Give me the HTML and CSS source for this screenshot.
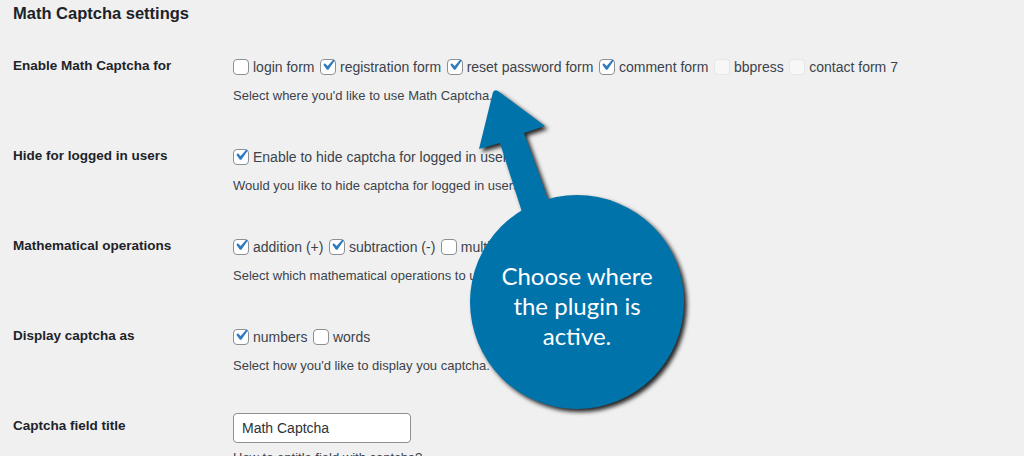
FILE: index.html
```html
<!DOCTYPE html>
<html lang="en">
<head>
<meta charset="utf-8">
<title>Math Captcha settings</title>
<link rel="stylesheet" href="styles.css">
</head>
<body>
<div class="wrap">
  <h2 class="title">Math Captcha settings</h2>
  <div class="form">
    <div class="row">
      <div class="th">Enable Math Captcha for</div>
      <div class="td">
        <div class="opts">
          <span class="opt"><span class="cb"></span>login form</span>
          <span class="opt"><span class="cb on"><svg viewBox="0 0 20 20"><path d="M14.83 4.89l1.34.94-5.81 8.38H9.02L5.78 9.67l1.34-1.25 2.57 2.4z"/></svg></span>registration form</span>
          <span class="opt"><span class="cb on"><svg viewBox="0 0 20 20"><path d="M14.83 4.89l1.34.94-5.81 8.38H9.02L5.78 9.67l1.34-1.25 2.57 2.4z"/></svg></span>reset password form</span>
          <span class="opt"><span class="cb on"><svg viewBox="0 0 20 20"><path d="M14.83 4.89l1.34.94-5.81 8.38H9.02L5.78 9.67l1.34-1.25 2.57 2.4z"/></svg></span>comment form</span>
          <span class="opt"><span class="cb off"></span>bbpress</span>
          <span class="opt"><span class="cb off"></span>contact form 7</span>
        </div>
        <p class="desc">Select where you'd like to use Math Captcha.</p>
      </div>
    </div>
    <div class="row">
      <div class="th">Hide for logged in users</div>
      <div class="td">
        <div class="opts">
          <span class="opt"><span class="cb on"><svg viewBox="0 0 20 20"><path d="M14.83 4.89l1.34.94-5.81 8.38H9.02L5.78 9.67l1.34-1.25 2.57 2.4z"/></svg></span>Enable to hide captcha for logged in users</span>
        </div>
        <p class="desc">Would you like to hide captcha for logged in users?</p>
      </div>
    </div>
    <div class="row">
      <div class="th">Mathematical operations</div>
      <div class="td">
        <div class="opts">
          <span class="opt"><span class="cb on"><svg viewBox="0 0 20 20"><path d="M14.83 4.89l1.34.94-5.81 8.38H9.02L5.78 9.67l1.34-1.25 2.57 2.4z"/></svg></span>addition (+)</span>
          <span class="opt"><span class="cb on"><svg viewBox="0 0 20 20"><path d="M14.83 4.89l1.34.94-5.81 8.38H9.02L5.78 9.67l1.34-1.25 2.57 2.4z"/></svg></span>subtraction (-)</span>
          <span class="opt"><span class="cb"></span>multiplication (&times;)</span>
        </div>
        <p class="desc">Select which mathematical operations to use in your captcha.</p>
      </div>
    </div>
    <div class="row">
      <div class="th">Display captcha as</div>
      <div class="td">
        <div class="opts">
          <span class="opt"><span class="cb on"><svg viewBox="0 0 20 20"><path d="M14.83 4.89l1.34.94-5.81 8.38H9.02L5.78 9.67l1.34-1.25 2.57 2.4z"/></svg></span>numbers</span>
          <span class="opt"><span class="cb"></span>words</span>
        </div>
        <p class="desc">Select how you'd like to display you captcha.</p>
      </div>
    </div>
    <div class="row">
      <div class="th">Captcha field title</div>
      <div class="td td-input">
        <div class="input">Math Captcha</div>
        <p class="desc desc-input">How to entitle field with captcha?</p>
      </div>
    </div>
  </div>
</div>

<div class="callout">
  <svg class="callout-shape" width="1024" height="456" viewBox="0 0 1024 456">
    <path d="M493 92 Q495 89 498 91 L545 126 L524 133 L550 205 L522 212 L500 143 L479 149 Z"/>
    <circle cx="577" cy="302" r="107"/>
  </svg>
  <div class="callout-text">Choose where<br>the plugin is<br>active.</div>
</div>
</body>
</html>
```

FILE: styles.css
```css
html, body {
  margin: 0;
  padding: 0;
}

body {
  background: #f0f0f1;
  font-family: "Liberation Sans", Arial, sans-serif;
  color: #3c434a;
  width: 1024px;
  height: 456px;
  overflow: hidden;
  position: relative;
}

.wrap {
  padding-left: 13px;
}

.title {
  margin: 0;
  font-size: 16.5px;
  line-height: 26px;
  font-weight: bold;
  color: #1d2327;
}

.form {
  margin-top: 11px;
}

.row {
  display: grid;
  grid-template-columns: 220px 1fr;
  height: 90px;
}

.th {
  padding-top: 20px;
  line-height: 18px;
  font-size: 13.5px;
  font-weight: bold;
  color: #1d2327;
}

.td {
  padding-top: 20px;
}

.td-input {
  padding-top: 16px;
}

.opts {
  display: flex;
  align-items: center;
  height: 20px;
  font-size: 14px;
  white-space: nowrap;
}

.opt {
  display: inline-flex;
  align-items: center;
  margin-right: 5.5px;
}

.cb {
  box-sizing: border-box;
  width: 16px;
  height: 16px;
  border: 1px solid #8c8f94;
  border-radius: 4px;
  background: #fff;
  margin-right: 4px;
  display: inline-flex;
  align-items: center;
  justify-content: center;
  flex: none;
}

.cb svg {
  width: 22px;
  height: 22px;
  margin: -4px -4px 0 -4px;
  fill: #2f7bc0;
  flex: none;
}

.cb.off {
  background: rgba(255, 255, 255, 0.45);
  border-color: rgba(220, 220, 222, 0.6);
}

.desc {
  margin: 10px 0 0;
  font-size: 13px;
  line-height: 18px;
  color: #3c434a;
}

.desc-input {
  margin-top: 6px;
}

.input {
  box-sizing: border-box;
  width: 178px;
  height: 30px;
  border: 1px solid #8c8f94;
  border-radius: 4px;
  background: #fff;
  padding: 0 8px;
  font-size: 14px;
  line-height: 28px;
  color: #2c3338;
}

.callout {
  position: absolute;
  left: 0;
  top: 0;
  width: 1024px;
  height: 456px;
  pointer-events: none;
}

.callout-shape {
  display: block;
  fill: #0073aa;
  filter: drop-shadow(3px 3px 2px rgba(0, 0, 0, 0.85));
}

.callout-text {
  position: absolute;
  left: 477px;
  top: 261px;
  width: 200px;
  text-align: center;
  font-family: Lato, "Open Sans", sans-serif;
  font-size: 24px;
  line-height: 30px;
  color: #fff;
}
```
